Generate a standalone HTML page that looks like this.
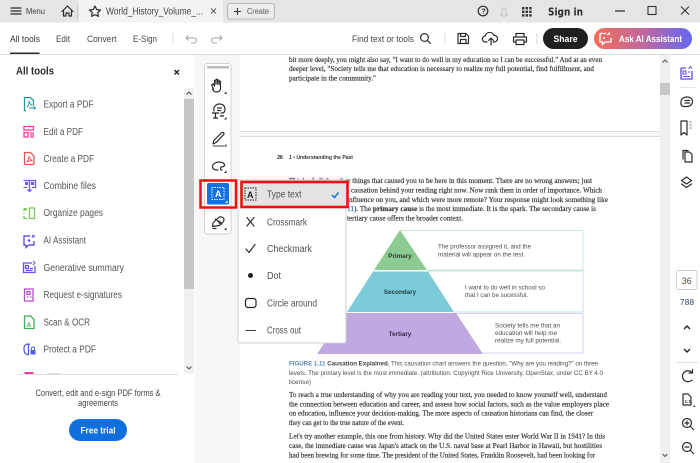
<!DOCTYPE html>
<html><head><meta charset="utf-8"><style>
html,body{margin:0;padding:0;background:#fff;width:700px;height:463px;overflow:hidden}
svg{display:block;filter:blur(.3px)}
text{font-family:"Liberation Sans",sans-serif;white-space:pre}
.ui{fill:#444;font-size:9.6px}
.tl{fill:#555;font-size:9.8px}
.d{font-family:"Liberation Serif",serif;font-size:7.2px;fill:#383838;stroke:#383838;stroke-width:.18}
.c{font-size:6.6px;fill:#4d4d4d}
.p{font-size:6.8px;fill:#4d4d4d}
.i{fill:none;stroke:#2c2c2c;stroke-width:1.2;stroke-linecap:round;stroke-linejoin:round}
.m{fill:#505050;font-size:9.8px}
</style></head><body>
<svg width="700" height="463" viewBox="0 0 700 463" xmlns="http://www.w3.org/2000/svg">
<defs><linearGradient id="g" x1="0" x2="1" y1="0" y2="0"><stop offset="0" stop-color="#f56c58"/><stop offset=".5" stop-color="#c0689c"/><stop offset="1" stop-color="#6368f5"/></linearGradient></defs>

<!-- top bar -->
<rect width="700" height="22.5" fill="#e5e5e5"/>
<rect x="79" y="0" width="144" height="22.5" fill="#f3f3f3"/>
<path class="i" d="M11 8h10M11 11h10M11 14h10"/>
<text x="26" y="14" font-size="8.500" fill="#444" textLength="19" lengthAdjust="spacingAndGlyphs">Menu</text>
<path class="i" stroke-width="1.300" d="M62 11.500L67.500 6l5.500 5.500M63.500 10.500V16h2.500v-3h3v3h2.500v-5.500"/>
<path d="M77.500 4v15" stroke="#c8c8c8"/>
<path class="i" d="M95 6l1.700 3.500 3.800.5-2.800 2.600.7 3.800L95 14.600l-3.400 1.800.7-3.800-2.800-2.600 3.800-.5z"/>
<text x="106" y="14.500" font-size="10" fill="#444" textLength="97" lengthAdjust="spacingAndGlyphs">World_History_Volume_...</text>
<path d="M211 8.500l5 5M216 8.500l-5 5" stroke="#555" stroke-width=".9" fill="none"/>
<rect x="227.500" y="3.500" width="47" height="15.500" rx="2.500" fill="#ececec" stroke="#aaa" stroke-width=".8"/>
<path d="M234 11.500h7M237.500 8v7" stroke="#333" stroke-width="1.100"/>
<text x="247" y="14" font-size="8.500" fill="#555" textLength="22" lengthAdjust="spacingAndGlyphs">Create</text>
<circle cx="483" cy="11" r="4.800" class="i" stroke-width="1"/>
<text x="481.200" y="13.700" font-size="7.500" font-weight="bold" fill="#333">?</text>
<path d="M500 15h8M501 15c1-1 1-3 1-5a2 2 0 0 1 4 0c0 2 0 4 1 5M503 16.500h2" fill="none" stroke="#c4c4c4"/>
<g fill="#333"><rect x="522" y="7" width="2.400" height="2.400"/><rect x="525.600" y="7" width="2.400" height="2.400"/><rect x="529.200" y="7" width="2.400" height="2.400"/><rect x="522" y="10.600" width="2.400" height="2.400"/><rect x="525.600" y="10.600" width="2.400" height="2.400"/><rect x="529.200" y="10.600" width="2.400" height="2.400"/><rect x="522" y="14.200" width="2.400" height="2.400"/><rect x="525.600" y="14.200" width="2.400" height="2.400"/><rect x="529.200" y="14.200" width="2.400" height="2.400"/></g>
<text x="548" y="15.500" font-size="11" font-weight="bold" fill="#2a2a2a" style="font-family:'DejaVu Sans',sans-serif" textLength="35" lengthAdjust="spacingAndGlyphs">Sign in</text>
<path d="M615 11h10" stroke="#222" stroke-width="1.200"/>
<rect x="648" y="6.500" width="8" height="8" fill="none" stroke="#333" stroke-width="1.100"/>
<path d="M681 6.500l8 8M689 6.500l-8 8" stroke="#333" stroke-width="1.100"/>

<!-- toolbar -->
<rect y="22.500" width="700" height="31.500" fill="#fff"/>
<rect y="54" width="700" height="1" fill="#dcdcdc"/>
<text x="10" y="42" font-size="9.600" fill="#333" textLength="30" lengthAdjust="spacingAndGlyphs">All tools</text>
<rect x="10" y="52.500" width="29.500" height="1.500" fill="#2c2c2c"/>
<text class="ui" x="56" y="42" textLength="14" lengthAdjust="spacingAndGlyphs">Edit</text>
<text class="ui" x="87" y="42" textLength="29.500" lengthAdjust="spacingAndGlyphs">Convert</text>
<text class="ui" x="133" y="42" textLength="24" lengthAdjust="spacingAndGlyphs">E-Sign</text>
<path d="M173 33v11" stroke="#d5d5d5"/>
<path d="M186 38h8a2.500 2.500 0 0 1 0 5h-3M188.500 35.500L186 38l2.500 2.500" fill="none" stroke="#a5a5a5"/>
<path d="M222 38h-8a2.500 2.500 0 0 0 0 5h3M219.500 35.500L222 38l-2.500 2.500" fill="none" stroke="#a5a5a5"/>
<text class="ui" x="352" y="42" textLength="62" lengthAdjust="spacingAndGlyphs">Find text or tools</text>
<circle cx="424.500" cy="37.500" r="3.900" class="i" stroke-width="1.300"/><path class="i" stroke-width="1.400" d="M427.500 40.500l3 3"/>
<path d="M445 33v11" stroke="#d5d5d5"/>
<path class="i" d="M458 33.500h8l2.500 2.500v7.500h-10.500zM460.500 33.500v3h5v-3M460.500 43.500v-4h5.500v4"/>
<path class="i" stroke-width="1.300" d="M487 42h-1.500a3 3 0 0 1-.3-6 4.500 4.500 0 0 1 8.600-.7 3.300 3.300 0 0 1 .7 6.700H493M491 45v-6.500M488.500 40.500l2.500-2.500 2.500 2.500"/>
<path class="i" stroke-width="1.300" d="M516 37v-3.500h8v3.500M516 42h-2.500v-5h13v5H524M516 40h8v4.500h-8z"/>
<path d="M537 33v11" stroke="#d5d5d5"/>
<rect x="543" y="28" width="45" height="21" rx="10.500" fill="#202020"/>
<text x="553.500" y="42" font-size="9.500" font-weight="bold" fill="#fff" textLength="24" lengthAdjust="spacingAndGlyphs">Share</text>
<rect x="594" y="28" width="98" height="21" rx="10.500" fill="url(#g)"/>
<path d="M600 33.500h6M611 38v4h-6l-2.500 2.500V42H600v-8.500" fill="none" stroke="#fff" stroke-width="1.300"/>
<path d="M607 35l3-2.500M610 35l-2-2" stroke="#fff"/><circle cx="604" cy="38" r="1" fill="#fff"/>
<text x="619" y="42" font-size="9.500" font-weight="bold" fill="#fff" textLength="63" lengthAdjust="spacingAndGlyphs">Ask AI Assistant</text>

<!-- doc backgrounds -->
<rect x="195" y="55" width="45" height="408" fill="#f7f7f7"/>
<rect x="240" y="55" width="420" height="408" fill="#fff"/>
<rect x="240" y="131" width="420" height="6" fill="#f6f6f6"/>
<path d="M240 131.500h420M240 136.500h420" stroke="#dedede"/>

<!-- doc text -->
<text class="d" x="289" y="62" textLength="313" lengthAdjust="spacingAndGlyphs">bit more deeply, you might also say, "I want to do well in my education so I can be successful." And at an even</text>
<text class="d" x="289" y="71" textLength="305" lengthAdjust="spacingAndGlyphs">deeper level, "Society tells me that education is necessary to realize my full potential, find fulfillment, and</text>
<text class="d" x="289" y="80.500" textLength="87" lengthAdjust="spacingAndGlyphs">participate in the community."</text>
<text x="277" y="159" font-size="5.800" font-weight="bold" fill="#333" textLength="6">26</text>
<text x="289" y="159" font-size="5.800" font-weight="bold" fill="#333" textLength="64" lengthAdjust="spacingAndGlyphs">1 • Understanding the Past</text>
<text class="d" x="289" y="183" textLength="303" lengthAdjust="spacingAndGlyphs">Think of all the other things that caused you to be here in this moment. There are no wrong answers; just</text>
<text class="d" x="351" y="192.500" textLength="251" lengthAdjust="spacingAndGlyphs">causation behind your reading right now. Now rank them in order of importance. Which</text>
<text class="d" x="347" y="202" textLength="261" lengthAdjust="spacingAndGlyphs">influence on you, and which were more remote? Your response might look something like</text>
<text class="d" x="347" y="211" textLength="249" lengthAdjust="spacingAndGlyphs"><tspan fill="#2a6fb0" stroke="#2a6fb0">11</tspan>). The <tspan font-weight="bold">primary cause</tspan> is the most immediate. It is the spark. The secondary cause is</text>
<text class="d" x="347" y="220.500" textLength="116" lengthAdjust="spacingAndGlyphs">tertiary cause offers the broader context.</text>

<!-- diagram -->
<path d="M400 230.500H583V270H427" fill="none" stroke="#cfe8cf"/>
<path d="M428 271H583V312H454" fill="none" stroke="#bde4ea"/>
<path d="M456 313.500H583V353H483" fill="none" stroke="#dccff0"/>
<path d="M400 230L427 270H374z" fill="#8ccb92"/>
<path d="M373 271.500H428L454 312H347z" fill="#7bcbd9"/>
<path d="M345 313H456L483 354H317z" fill="#c0a9e1"/>
<text x="400" y="258" text-anchor="middle" font-size="6.300" font-weight="bold" fill="#2a3a2a">Primary</text>
<text x="400" y="294" text-anchor="middle" font-size="6.300" font-weight="bold" fill="#1f3a48">Secondary</text>
<text x="400" y="336" text-anchor="middle" font-size="6.300" font-weight="bold" fill="#33284a">Tertiary</text>
<text class="p" x="438" y="248.500" textLength="93" lengthAdjust="spacingAndGlyphs">The professor assigned it, and the</text>
<text class="p" x="438" y="256.500" textLength="87" lengthAdjust="spacingAndGlyphs">material will appear on the test.</text>
<text class="p" x="465" y="289.500" textLength="80" lengthAdjust="spacingAndGlyphs">I want to do well in school so</text>
<text class="p" x="465" y="297" textLength="63" lengthAdjust="spacingAndGlyphs">that I can be sucessful.</text>
<text class="p" x="495" y="327.500" textLength="65" lengthAdjust="spacingAndGlyphs">Society tells me that an</text>
<text class="p" x="495" y="335" textLength="62" lengthAdjust="spacingAndGlyphs">education will help me</text>
<text class="p" x="495" y="342.500" textLength="66" lengthAdjust="spacingAndGlyphs">realize my full potential.</text>

<!-- caption -->
<text class="c" x="289" y="365.500" textLength="309" lengthAdjust="spacingAndGlyphs"><tspan font-weight="bold" fill="#5a86ab">FIGURE 1.11</tspan> <tspan font-weight="bold" fill="#444">Causation Explained.</tspan> This causation chart answers the question, "Why are you reading?" on three</text>
<text class="c" x="289" y="375" textLength="314" lengthAdjust="spacingAndGlyphs">levels. The primary level is the most immediate. (attribution: Copyright Rice University, OpenStax, under CC BY 4.0</text>
<text class="c" x="289" y="384" textLength="22" lengthAdjust="spacingAndGlyphs">license)</text>
<text class="d" x="289" y="397" textLength="318" lengthAdjust="spacingAndGlyphs">To reach a true understanding of why you are reading your text, you needed to know yourself well, understand</text>
<text class="d" x="289" y="406.500" textLength="320" lengthAdjust="spacingAndGlyphs">the connection between education and career, and assess how social factors, such as the value employers place</text>
<text class="d" x="289" y="415.500" textLength="304" lengthAdjust="spacingAndGlyphs">on education, influence your decision-making. The more aspects of causation historians can find, the closer</text>
<text class="d" x="289" y="425" textLength="115" lengthAdjust="spacingAndGlyphs">they can get to the true nature of the event.</text>
<text class="d" x="289" y="438.500" textLength="316" lengthAdjust="spacingAndGlyphs">Let's try another example, this one from history. Why did the United States enter World War II in 1941? In this</text>
<text class="d" x="289" y="448" textLength="313" lengthAdjust="spacingAndGlyphs">case, the immediate cause was Japan's attack on the U.S. naval base at Pearl Harbor in Hawaii, but hostilities</text>
<text class="d" x="289" y="457.500" textLength="306" lengthAdjust="spacingAndGlyphs">had been brewing for some time. The president of the United States, Franklin Roosevelt, had been looking for</text>

<!-- left panel -->
<rect x="0" y="55" width="195" height="408" fill="#fff"/>
<text x="16" y="74.500" font-size="10.800" font-weight="bold" fill="#2c2c2c" textLength="38" lengthAdjust="spacingAndGlyphs">All tools</text>
<path d="M174.500 70l4.500 4.500M179 70l-4.500 4.500" stroke="#222" stroke-width="1.400"/>
<rect x="184" y="88" width="10" height="286" fill="#f0f0f0"/>
<rect x="184" y="99" width="10" height="190" fill="#c6c6c6"/>
<path d="M186.500 94.500l2.500-2.500 2.500 2.500M186.500 366.500l2.500 2.500 2.500-2.500" fill="none" stroke="#555" stroke-width="1.100"/>

<path d="M26 110.500h-1.500v-13h6l3 3v5" fill="none" stroke="#2c9a9a" stroke-width="1.300"/><path d="M27 107c2-2 2-5 2-6 .5 2 2 4 3.500 4.500M29 108h6M33.500 106.500l2 1.500-2 1.500" fill="none" stroke="#2c9a9a" stroke-width="1"/>
<text class="tl" x="43.500" y="107.500" textLength="50" lengthAdjust="spacingAndGlyphs">Export a PDF</text>
<path d="M24 126.500h9.500v3.500H24zM24 132.500h4v4.500h-4zM30 133h4M30 135h4M30 137h4" fill="none" stroke="#e0409a" stroke-width="1.300"/>
<text class="tl" x="43.500" y="135" textLength="39.500" lengthAdjust="spacingAndGlyphs">Edit a PDF</text>
<path d="M24.500 152.500h6l3.500 3.500v7.500a1 1 0 0 1-1 1h-8.500z" fill="none" stroke="#e0565c" stroke-width="1.300"/><path d="M26.500 162c2-2 2.500-5 2.500-6 .3 2 1.500 4 3.500 4.500-2 0-4 .5-6 1.500z" fill="none" stroke="#e0565c" stroke-width=".9"/>
<text class="tl" x="43.500" y="162" textLength="50.500" lengthAdjust="spacingAndGlyphs">Create a PDF</text>
<path d="M23.500 180.500h12v7h-3.500M27 187.500h-3.500zM29.500 181v6M29.500 186v5M27.500 189.500l2 2 2-2" fill="none" stroke="#6f5de0" stroke-width="1.300"/><rect x="25" y="182" width="3" height="3" fill="#6f5de0"/><rect x="31" y="182" width="3" height="3" fill="#6f5de0"/>
<text class="tl" x="43.500" y="189" textLength="52.500" lengthAdjust="spacingAndGlyphs">Combine files</text>
<path d="M29.500 208h5v10.500h-5zM27 209h-3v2M24 213v1M24 216v2.500h3" fill="none" stroke="#79c95a" stroke-width="1.300"/><rect x="24" y="208" width="2.500" height="2.500" fill="#79c95a"/>
<text class="tl" x="43.500" y="216" textLength="59.500" lengthAdjust="spacingAndGlyphs">Organize pages</text>
<path d="M30 236h-6v9h2v2.500l3-2.500h5v-4" fill="none" stroke="#6653df" stroke-width="1.400"/><circle cx="29" cy="240.500" r="1.300" fill="#6653df"/><path d="M32 237.500l2.500-2.500M32 235l2.500 2.500" stroke="#6653df"/>
<text class="tl" x="43.500" y="243.500" textLength="42.500" lengthAdjust="spacingAndGlyphs">AI Assistant</text>
<path d="M32 263h-8.500v9.500H35V266M25.500 265.500h3v3h-3zM25.500 270.500h7M30 268.500h3" fill="none" stroke="#6653df" stroke-width="1.300"/><path d="M33 261l2 2-2 2" stroke="#6653df" fill="none"/>
<text class="tl" x="43.500" y="271" textLength="80.500" lengthAdjust="spacingAndGlyphs">Generative summary</text>
<path d="M24.500 289h8.500v12h-8.500z" fill="none" stroke="#b64fc8" stroke-width="1.300"/><path d="M27 291.500h3v3h-3zM27 297h1.500M30 297h1.500" fill="none" stroke="#b64fc8" stroke-width="1.300"/>
<text class="tl" x="43.500" y="298" textLength="78.500" lengthAdjust="spacingAndGlyphs">Request e-signatures</text>
<path d="M24.500 316h6l3.500 3.500v9h-9.500z" fill="none" stroke="#3fae5a" stroke-width="1.300"/><text x="26.500" y="327" font-size="6.500" font-weight="bold" fill="#3fae5a">A</text>
<text class="tl" x="43.500" y="325.500" textLength="46.500" lengthAdjust="spacingAndGlyphs">Scan &amp; OCR</text>
<path d="M30 344.500c-2-1-6-.5-6 4s1.500 5.500 4 6.500M28.500 344.500v10.500" fill="none" stroke="#4f5fe0" stroke-width="1.300"/><rect x="30.500" y="350" width="5" height="4.500" rx=".5" fill="#4f5fe0"/><path d="M31.500 350v-1.500a1.500 1.500 0 0 1 3 0v1.500" fill="none" stroke="#4f5fe0"/>
<text class="tl" x="43.500" y="352.500" textLength="52.500" lengthAdjust="spacingAndGlyphs">Protect a PDF</text>
<rect x="24.500" y="372" width="9" height="2" fill="#e0409a"/>
<rect x="47" y="373" width="13" height="1" fill="#ddd"/>

<rect x="0" y="374" width="195" height="89" fill="#fff"/>
<path d="M18 374.500h160" stroke="#dcdcdc"/>
<text x="98" y="396" text-anchor="middle" font-size="8.800" fill="#444" textLength="125" lengthAdjust="spacingAndGlyphs">Convert, edit and e-sign PDF forms &amp;</text>
<text x="98" y="406" text-anchor="middle" font-size="8.800" fill="#444" textLength="40" lengthAdjust="spacingAndGlyphs">agreements</text>
<rect x="69" y="419" width="58" height="22" rx="11" fill="#0f6fdc"/>
<text x="98" y="433.500" text-anchor="middle" font-size="9.500" font-weight="bold" fill="#fff" textLength="35" lengthAdjust="spacingAndGlyphs">Free trial</text>

<!-- tool panel -->
<rect x="204.500" y="63.500" width="26.500" height="170.500" rx="3" fill="#fff" stroke="#d2d2d2"/>
<rect x="207" y="66" width="22" height="2.500" fill="#bdbdbd"/>
<path class="i" stroke-width="1.100" d="M213.500 89l-1.500-3.500c-.5-1.500 1-2 1.700-.8l.8 1.300v-5c0-1 1.500-1 1.500 0v3-4c0-1 1.600-1 1.600 0v4-3.200c0-1 1.500-1 1.500 0v3.700-2.500c0-1 1.400-1 1.400 0V88c0 2.500-1.500 4-4 4s-3.500-1-4-3z"/>
<path d="M224 94l2.500-2.500V94z" fill="#222"/>
<path class="i" stroke-width="1" d="M214 111c-1-4 2-7 5.500-7s6 2.500 5.500 6c-.3 2-1.500 3-3 3h-1M217.500 108h4M217.500 110.500h3"/>
<path d="M212 113h7M215.500 113v5M213 118h5M220 116h4" stroke="#222" stroke-width="1.200" fill="none"/>
<path d="M224 119.500l2.500-2.500v2.500z" fill="#222"/>
<path class="i" stroke-width="1.100" d="M213 144l.8-3.500 7.500-7.500c1-1 3-.5 2.700 1.200l-7.500 8z"/><path d="M213 146h11" stroke="#777" stroke-width="1.400"/>
<path d="M224 146.500l2.500-2.500v2.500z" fill="#222"/>
<path class="i" stroke-width="1.100" d="M218 170c-3 0-5.500-1-5.500-3.500s3-4.500 6.500-4.500 5.500 1.500 5.500 3-2 2-3.500 2c-.7 1.500-.7 3 1 3"/>
<path d="M224 173l2.500-2.500V173z" fill="#222"/>

<rect x="200.500" y="180.500" width="35.500" height="27" fill="none" stroke="#f00f0f" stroke-width="2.500"/>
<rect x="207" y="183" width="22" height="21.500" rx="1.500" fill="#1172e4"/>
<rect x="212" y="187.500" width="12" height="12" fill="none" stroke="#fff" stroke-width="1" stroke-dasharray="1.500 1"/>
<text x="215" y="197" font-size="9" font-weight="bold" fill="#fff">A</text>
<path d="M225 203l2.500-2.500V203z" fill="#fff"/>

<path class="i" stroke-width="1.200" d="M212.500 226.500l.5-3.500 5-5c2-2 6-1 6 1.500 0 1.500-1 2.500-2 3.500l-2.500 2.500zM219 221l3 3M215 219c2 1 4 3 5 5M213 228.500h3"/>
<path d="M224 230l2.500-2.500V230z" fill="#222"/>

<!-- popup menu -->
<rect x="238" y="180" width="108" height="163" rx="2" fill="#fff" stroke="#d0d0d0"/>
<rect x="241.500" y="182" width="106" height="25" fill="#e3e3e3" stroke="#f00f0f" stroke-width="2.600"/>
<rect x="245" y="188" width="11" height="12" fill="none" stroke="#222" stroke-width="1" stroke-dasharray="1.500 1"/>
<text x="247" y="198" font-size="9" font-weight="bold" fill="#222">A</text>
<text class="m" x="267" y="197.500" textLength="34.500" lengthAdjust="spacingAndGlyphs">Type text</text>
<path d="M332 195l2.500 2.500 4-5" fill="none" stroke="#1172e4" stroke-width="1.500"/>
<path class="i" stroke-width="1.300" d="M247 217.500l7 8.500M254 217.500l-7 8.500"/>
<text class="m" x="267" y="225.500" textLength="40" lengthAdjust="spacingAndGlyphs">Crossmark</text>
<path class="i" stroke-width="1.300" d="M246 249l3 3.500 6-8"/>
<text class="m" x="267" y="252" textLength="45" lengthAdjust="spacingAndGlyphs">Checkmark</text>
<circle cx="250.500" cy="275.500" r="2.500" fill="#222"/>
<text class="m" x="267" y="279" textLength="14" lengthAdjust="spacingAndGlyphs">Dot</text>
<rect x="245.500" y="298.500" width="10.500" height="9" rx="2.500" fill="none" stroke="#222" stroke-width="1.200"/>
<text class="m" x="267" y="306.500" textLength="50" lengthAdjust="spacingAndGlyphs">Circle around</text>
<path d="M245.500 330.500h10.500" stroke="#444" stroke-width="1.100"/>
<text class="m" x="267" y="333.500" textLength="34" lengthAdjust="spacingAndGlyphs">Cross out</text>

<!-- doc scrollbar -->
<rect x="660" y="55" width="10" height="408" fill="#f0f0f0"/>
<rect x="660" y="83" width="10" height="12" fill="#c8c8c8"/>
<path d="M662.500 62.500l2.500-2.500 2.500 2.500M662.500 454l2.500 2.500 2.500-2.500" fill="none" stroke="#555" stroke-width="1.100"/>

<!-- right rail -->
<rect x="670" y="55" width="30" height="408" fill="#fff"/>
<path d="M681 68h5M692 71v8h-11V68" fill="none" stroke="#5b4fdc" stroke-width="1.300"/><path d="M683 71h3v3h-3zM683 76.500h7M688 72h2" fill="none" stroke="#5b4fdc"/><path d="M688.500 69l2-2.500 1.500 2" fill="none" stroke="#5b4fdc"/>
<path d="M679 87.500h16" stroke="#e6e6e6"/>
<path class="i" stroke-width="1.200" d="M683 106.500c-2-1-2.500-3-2-5 .5-3 3-4.500 6-4.500 3.500 0 5.500 2 5.500 4.500s-2 5-5.500 5h-4zM685 100.500h4.500M685 103h4.500"/>
<path class="i" stroke-width="1.300" d="M681 121h6v14l-3-2.500-3 2.500z"/><path d="M689 122h3M689 125h3M689 128h3" stroke="#999" fill="none"/>
<path class="i" stroke-width="1.200" d="M683 159v-8.500h5M685 152h4.500l2.500 2.500v7.500h-7z"/>
<path class="i" stroke-width="1.200" d="M686.500 177l-5 3.500 5 3.500 5-3.500zM681.500 184l5 3.500 5-3.500"/>

<rect x="676.500" y="270.500" width="20.500" height="19" rx="2.500" fill="#fff" stroke="#ccc"/>
<text x="686.800" y="284" text-anchor="middle" font-size="9" fill="#5a4a3a">36</text>
<text x="687" y="305" text-anchor="middle" font-size="8.500" fill="#3d4a66">788</text>
<path d="M684 329l3-3 3 3M684 349l3 3 3-3" fill="none" stroke="#222" stroke-width="1.400"/>
<path d="M676 362.500h22" stroke="#e2e2e2"/>
<path class="i" stroke-width="1.200" d="M692 380a5.500 5.500 0 1 1 0-7.500M692.500 369.500v3.500H689"/>
<path class="i" stroke-width="1.100" d="M683 394h5l3 3v8h-8z"/><text x="684.500" y="403" font-size="4.500" font-weight="bold" fill="#333">1:1</text><path d="M693 407l2-2v2z" fill="#222"/>
<circle cx="687" cy="423" r="4.500" class="i"/><path class="i" d="M690.500 426.500l3 3M685 423h4M687 421v4"/>
<circle cx="687" cy="447" r="4.500" class="i"/><path class="i" d="M690.500 450.500l3 3M685 447h4"/>
</svg>
</body></html>
